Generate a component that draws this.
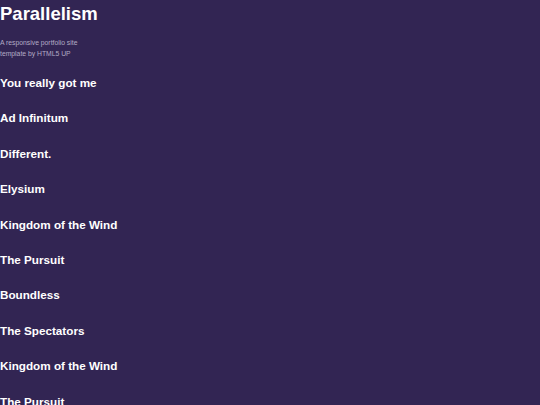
import React from 'react'

const items = [
  'You really got me',
  'Ad Infinitum',
  'Different.',
  'Elysium',
  'Kingdom of the Wind',
  'The Pursuit',
  'Boundless',
  'The Spectators',
  'Kingdom of the Wind',
  'The Pursuit',
  'Boundless',
  'The Spectators',
]

const App: React.FC = () => {
  return (
    <div
      className="min-h-screen h-[405px] overflow-hidden bg-[#322553] text-white"
      style={{ fontFamily: '"Liberation Sans", Arial, sans-serif' }}
    >
      {/* Header */}
      <header>
        <h1 className="text-[18.5px] font-bold leading-[27px] text-white">
          Parallelism
        </h1>
        <p className="mt-[10px] text-[6.8px] leading-[11px] text-[#b3abc6]">
          A responsive portfolio site
          <br />
          template by HTML5 UP
        </p>
      </header>

      {/* Items */}
      <div className="mt-[15px]">
        {items.map((title, i) => (
          <article className="h-[35.4px]" key={i}>
            <h2 className="text-[11.7px] font-bold leading-[17.5px] text-white">
              {title}
            </h2>
          </article>
        ))}
      </div>
    </div>
  )
}

export default App
